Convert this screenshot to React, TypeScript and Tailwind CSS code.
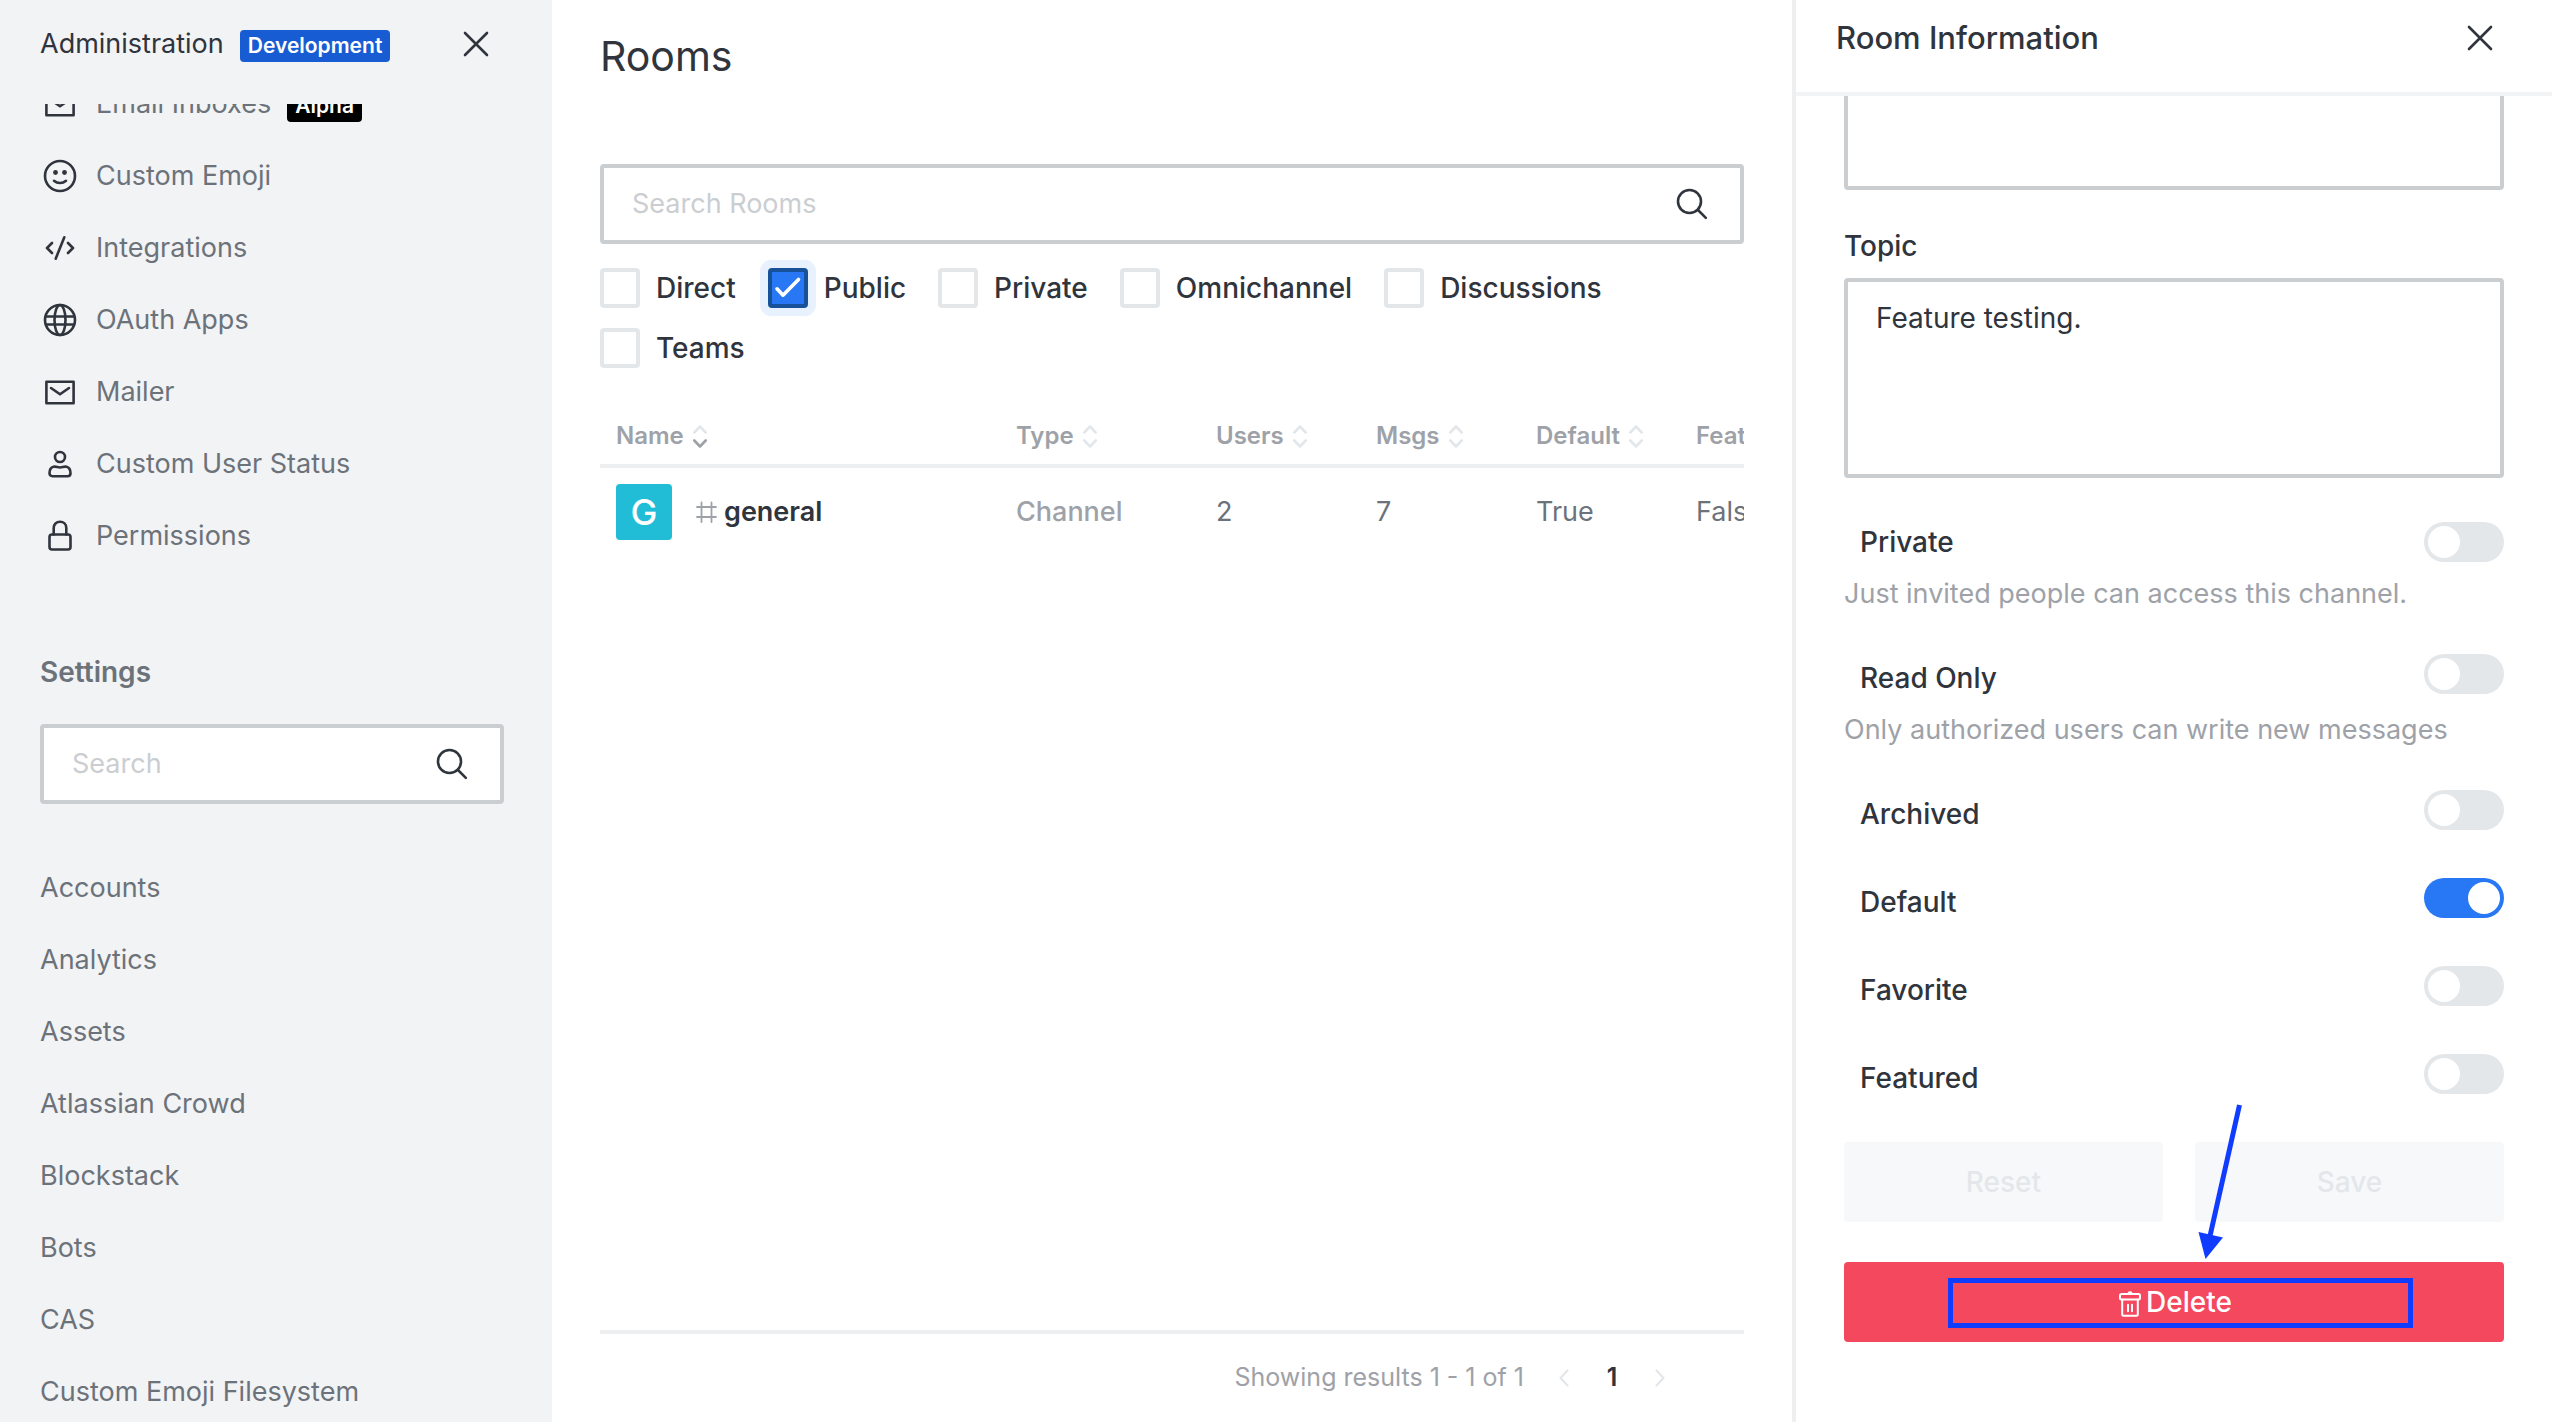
import type { ReactNode } from 'react';

type IconProps = { children: ReactNode };

function Icon({ children }: IconProps) {
  return (
    <svg
      viewBox="0 0 40 40"
      fill="none"
      stroke="currentColor"
      strokeWidth="2.6"
      strokeLinecap="round"
      strokeLinejoin="round"
      aria-hidden="true"
      className="size-10 shrink-0"
    >
      {children}
    </svg>
  );
}

const MailIcon = () => (
  <Icon>
    <path d="M6.400 9.800h27.200v21.400H6.400z" />
    <path d="M11 16l9 6.300 9-6.300" />
  </Icon>
);

const EmojiIcon = () => (
  <Icon>
    <circle cx="20" cy="20" r="15" />
    <circle cx="15.5" cy="16.5" r="2.4" fill="currentColor" stroke="none" />
    <circle cx="24.5" cy="16.5" r="2.4" fill="currentColor" stroke="none" />
    <path d="M14 24.800c3.400 3 8.600 3 12 0" />
  </Icon>
);

const CodeIcon = () => (
  <Icon>
    <path d="M12 15l-5 5 5 5M28 15l5 5-5 5M24.300 9.300l-8.600 21.400" />
  </Icon>
);

const GlobeIcon = () => (
  <Icon>
    <circle cx="20" cy="20" r="15" />
    <ellipse cx="20" cy="20" rx="5.500" ry="15" />
    <path d="M6 16.500h28M6 24.500h28" />
  </Icon>
);

const UserIcon = () => (
  <Icon>
    <circle cx="20" cy="13" r="5" />
    <path d="M13.500 22.800c2.400-.6 4 .7 6.500.7s4.100-1.300 6.500-.7c2.900.7 4 3.400 4 6.400 0 2-1 3-3 3h-15c-2 0-3-1-3-3 0-3 1.100-5.700 4-6.400z" />
  </Icon>
);

const LockIcon = () => (
  <Icon>
    <rect x="9.500" y="18.500" width="21" height="15" rx="2.500" />
    <path d="M13.700 18.500v-6.500c0-3.700 2.700-6.200 6.300-6.200s6.300 2.500 6.300 6.200v6.500" />
  </Icon>
);

const SearchIcon = () => (
  <Icon>
    <circle cx="17.500" cy="17.500" r="11.500" />
    <path d="M26 26l7.800 7.800" />
  </Icon>
);

const CloseIcon = () => (
  <Icon>
    <path d="M9 9l22 22M31 9L9 31" />
  </Icon>
);

const navItems = [
  { label: 'Email Inboxes', icon: <MailIcon />, tag: 'Alpha' },
  { label: 'Custom Emoji', icon: <EmojiIcon /> },
  { label: 'Integrations', icon: <CodeIcon /> },
  { label: 'OAuth Apps', icon: <GlobeIcon /> },
  { label: 'Mailer', icon: <MailIcon /> },
  { label: 'Custom User Status', icon: <UserIcon /> },
  { label: 'Permissions', icon: <LockIcon /> },
];

const settings = [
  'Accounts',
  'Analytics',
  'Assets',
  'Atlassian Crowd',
  'Blockstack',
  'Bots',
  'CAS',
  'Custom Emoji Filesystem',
];

function SearchBox({ label }: { label: string }) {
  return (
    <label className="flex h-20 items-center rounded-sm border-4 border-[#cbced1] bg-white px-7 text-[27px]">
      <input
        type="text"
        placeholder={label}
        aria-label={label}
        className="min-w-0 flex-1 bg-transparent outline-none placeholder:text-[#cbced1]"
      />
      <SearchIcon />
    </label>
  );
}

function Sidebar() {
  return (
    <aside className="flex w-[552px] shrink-0 flex-col bg-[#f2f3f5] text-[27px]">
      <header className="flex h-[104px] shrink-0 items-start justify-between pt-6 pr-14 pl-10">
        <h2 className="flex items-baseline gap-4 leading-10">
          Administration
          <span className="rounded-sm bg-[#175cd3] px-2 text-[21px] leading-8 font-semibold text-white">
            Development
          </span>
        </h2>
        <button type="button" aria-label="Close administration">
          <CloseIcon />
        </button>
      </header>
      <div className="min-h-0 flex-1 overflow-hidden text-[#6c727a]">
        <nav aria-label="Administration" className="-mt-9">
          {navItems.map((item) => (
            <a key={item.label} href="#" className="flex h-18 items-center gap-4 px-10">
              <span className="text-[#2f343d]">{item.icon}</span>
              <span className="flex items-baseline gap-4">
                {item.label}
                {item.tag && (
                  <span className="rounded-sm bg-black px-2 text-[21px] leading-8 font-semibold text-white">
                    {item.tag}
                  </span>
                )}
              </span>
            </a>
          ))}
        </nav>
        <h3 className="mt-20 px-10 text-[28px] leading-10 font-semibold">Settings</h3>
        <div className="mt-8 mb-12 pr-12 pl-10 text-[#2f343d]">
          <SearchBox label="Search" />
        </div>
        <nav aria-label="Settings">
          {settings.map((name) => (
            <a key={name} href="#" className="flex h-18 items-center px-10">
              {name}
            </a>
          ))}
        </nav>
      </div>
    </aside>
  );
}

function CheckFilter({ label, checked = false }: { label: string; checked?: boolean }) {
  return (
    <label className="flex items-center gap-4 leading-10 font-medium">
      <span className="relative flex size-10">
        <input
          type="checkbox"
          defaultChecked={checked}
          className="peer size-10 appearance-none rounded-sm border-4 border-[#e4e7ea] bg-white checked:border-[#175199] checked:bg-[#2878f5] checked:ring-8 checked:ring-[#e8f2ff]"
        />
        <svg
          viewBox="0 0 40 40"
          fill="none"
          stroke="currentColor"
          strokeWidth="3.600"
          strokeLinecap="round"
          strokeLinejoin="round"
          aria-hidden="true"
          className="pointer-events-none absolute inset-0 hidden text-white peer-checked:block"
        >
          <path d="M9 20.800l6 6.400 15.500-15.700" />
        </svg>
      </span>
      {label}
    </label>
  );
}

function SortIcon({ active = false }: { active?: boolean }) {
  return (
    <svg
      viewBox="0 0 16 24"
      fill="none"
      strokeWidth="2.600"
      strokeLinecap="round"
      strokeLinejoin="round"
      aria-hidden="true"
      className="h-6 w-4"
    >
      <path d="M2.300 8.500L8 2.500l5.700 6" className="stroke-[#e4e7ea]" />
      <path
        d="M2.300 16.500l5.700 6 5.700-6"
        className={active ? 'stroke-[#9ea2a8]' : 'stroke-[#e4e7ea]'}
      />
    </svg>
  );
}

const columns = [
  { label: 'Name', width: 'w-[400px]' },
  { label: 'Type', width: 'w-[200px]' },
  { label: 'Users', width: 'w-40' },
  { label: 'Msgs', width: 'w-40' },
  { label: 'Default', width: 'w-40' },
  { label: 'Featured', width: 'w-40' },
];

function RoomsTable() {
  return (
    <div className="min-h-0 flex-1 overflow-hidden">
      <table className="w-[1240px] table-fixed text-left">
        <thead>
          <tr className="h-[58px] border-b-4 border-[#eeeff1] text-2xl text-[#9ea2a8]">
            {columns.map((column) => (
              <th key={column.label} scope="col" className={`px-4 py-0 font-semibold ${column.width}`}>
                <button type="button" className="flex items-center gap-2">
                  {column.label}
                  <SortIcon active={column.label === 'Name'} />
                </button>
              </th>
            ))}
          </tr>
        </thead>
        <tbody>
          <tr className="h-[90px] text-[27px] text-[#6c727a]">
            <td className="px-4">
              <div className="flex items-center">
                <span className="flex size-14 items-center justify-center rounded-sm bg-[#21bdd6] text-4xl font-medium text-white">
                  G
                </span>
                <svg
                  viewBox="0 0 28 28"
                  fill="none"
                  stroke="currentColor"
                  strokeWidth="1.800"
                  strokeLinecap="round"
                  aria-hidden="true"
                  className="mr-1 ml-5 size-7 text-[#9ea2a8]"
                >
                  <path d="M5 9h19M5 19h19M9.500 4.500v19.500M19.500 4.500v19.500" />
                </svg>
                <span className="font-semibold text-[#2f343d]">general</span>
              </div>
            </td>
            <td className="px-4 font-medium text-[#9ea2a8]">Channel</td>
            <td className="px-4">2</td>
            <td className="px-4">7</td>
            <td className="px-4">True</td>
            <td className="px-4">False</td>
          </tr>
        </tbody>
      </table>
    </div>
  );
}

function PageArrow({ label, d }: { label: string; d: string }) {
  return (
    <button type="button" disabled aria-label={label} className="flex w-12 justify-center text-[#e4e7ea]">
      <svg
        viewBox="0 0 24 24"
        fill="none"
        stroke="currentColor"
        strokeWidth="2.200"
        strokeLinecap="round"
        strokeLinejoin="round"
        className="size-6"
      >
        <path d={d} />
      </svg>
    </button>
  );
}

function Rooms() {
  return (
    <main className="flex min-w-0 flex-1 flex-col px-12">
      <h1 className="mt-7 mb-20 text-[41px] leading-14">Rooms</h1>
      <SearchBox label="Search Rooms" />
      <div className="mt-6 mb-10 flex flex-wrap gap-x-8 gap-y-5">
        <CheckFilter label="Direct" />
        <CheckFilter label="Public" checked />
        <CheckFilter label="Private" />
        <CheckFilter label="Omnichannel" />
        <CheckFilter label="Discussions" />
        <CheckFilter label="Teams" />
      </div>
      <RoomsTable />
      <footer className="flex h-[92px] shrink-0 items-center justify-end border-t-4 border-[#eeeff1] pr-[60px] text-[25px] text-[#9ea2a8]">
        <span className="mr-4">Showing results 1 - 1 of 1</span>
        <PageArrow label="Previous page" d="M15.500 4.500L8.500 12l7 7.500" />
        <button type="button" aria-current="page" className="w-12 font-semibold text-[#2f343d]">
          1
        </button>
        <PageArrow label="Next page" d="M8.500 4.500l7 7.500-7 7.500" />
      </footer>
    </main>
  );
}

type ToggleProps = { label: string; hint?: string; on?: boolean; align?: string };

function Toggle({ label, hint, on = false, align = 'items-start' }: ToggleProps) {
  return (
    <div>
      <label className={`flex justify-between pl-4 leading-12 font-medium ${align}`}>
        {label}
        <input
          type="checkbox"
          role="switch"
          defaultChecked={on}
          className="flex h-10 w-20 appearance-none rounded-full bg-[#e4e7ea] p-1 before:size-8 before:rounded-full before:bg-white checked:justify-end checked:bg-[#2878f5]"
        />
      </label>
      {hint && <p className="mt-2 text-[27px] leading-10 text-[#9ea2a8]">{hint}</p>}
    </div>
  );
}

function DeleteHighlight() {
  return (
    <div className="pointer-events-none absolute inset-0" aria-hidden="true">
      <div className="absolute top-4 right-[91px] bottom-3.5 left-[104px] border-[5px] border-[#103cff]" />
      <svg viewBox="0 0 80 160" className="absolute bottom-full left-1/2 h-40 w-20 text-[#103cff]">
        <path d="M65.500 3L36 134" stroke="currentColor" strokeWidth="5" />
        <path d="M24.500 130l24.500 5.500-17.500 21.500z" fill="currentColor" />
      </svg>
    </div>
  );
}

function RoomInformation() {
  return (
    <aside className="flex w-[760px] shrink-0 flex-col border-l-4 border-[#eeeff1]">
      <header className="flex h-24 shrink-0 items-center justify-between border-b-4 border-[#f2f3f5] pr-[52px] pb-4 pl-10">
        <h2 className="text-[31px] leading-10 font-medium">Room Information</h2>
        <button type="button" aria-label="Close room information">
          <CloseIcon />
        </button>
      </header>
      <div className="min-h-0 flex-1 overflow-hidden px-12">
        <form className="-mt-[106px] flex flex-col gap-10">
          <textarea
            aria-label="Announcement"
            className="h-50 resize-none rounded-sm border-4 border-[#cbced1] px-7 py-4 leading-10 outline-none"
          />
          <div className="flex flex-col gap-4">
            <label htmlFor="topic" className="leading-8 font-medium">
              Topic
            </label>
            <textarea
              id="topic"
              defaultValue="Feature testing."
              className="h-50 resize-none rounded-sm border-4 border-[#cbced1] px-7 py-4 leading-10 outline-none"
            />
          </div>
          <Toggle label="Private" hint="Just invited people can access this channel." align="items-center" />
          <Toggle label="Read Only" hint="Only authorized users can write new messages" />
          <Toggle label="Archived" />
          <Toggle label="Default" on />
          <Toggle label="Favorite" />
          <Toggle label="Featured" />
          <div className="flex gap-8">
            <button type="button" disabled className="h-20 flex-auto rounded-sm bg-[#f7f8fa] font-medium text-[#e4e7ea]">
              Reset
            </button>
            <button type="button" disabled className="h-20 flex-auto rounded-sm bg-[#f7f8fa] font-medium text-[#e4e7ea]">
              Save
            </button>
          </div>
          <div className="relative">
            <button
              type="button"
              className="flex h-20 w-full items-center justify-center gap-0.5 rounded-sm bg-[#f4485f] font-medium text-white"
            >
              <svg
                viewBox="0 0 28 28"
                fill="none"
                stroke="currentColor"
                strokeWidth="2"
                strokeLinecap="round"
                strokeLinejoin="round"
                aria-hidden="true"
                className="mt-1 size-7"
              >
                <rect x="4" y="4" width="20" height="5.500" rx="1.500" />
                <path d="M12.500 3.500c0-1.800 3-1.800 3 0M6.200 9.500v14.700c0 1 .5 1.500 1.500 1.500h12.600c1 0 1.500-.5 1.500-1.500V9.500M12 14.700v6.500M16 14.700v6.500" />
              </svg>
              Delete
            </button>
            <DeleteHighlight />
          </div>
        </form>
      </div>
    </aside>
  );
}

export default function App() {
  return (
    <div className="flex h-screen overflow-hidden bg-white font-['Inter',sans-serif] text-[28px] text-[#2f343d]">
      <Sidebar />
      <Rooms />
      <RoomInformation />
    </div>
  );
}
